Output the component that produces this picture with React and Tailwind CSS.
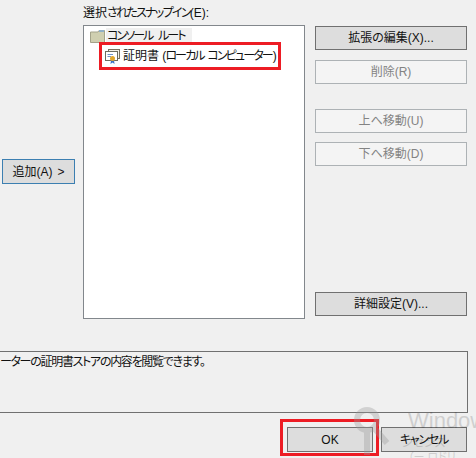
export default function App() {
  const Btn = ({ children, disabled, className = "" }) => (
    <div className={`w-[152px] h-[24px] flex items-center justify-center border text-[12px] leading-none ${disabled ? "border-[#adb2b5] bg-[#f4f4f4] text-[#838383]" : "border-[#707070] bg-[#dddddd] text-[#111]"} ${className}`}>{children}</div>
  );
  return (
    <div className="relative w-[476px] h-[458px] overflow-hidden bg-[#f0f0f0] flex flex-col [font-feature-settings:'palt'] font-['Liberation_Sans','Noto_Sans_CJK_JP',sans-serif] text-[#111]">
      <div className="flex pl-[2px] pr-[9px] pt-[6px]">
        <div className="w-[81px] flex flex-col pt-[153px]">
          <div className="w-[73px] h-[25px] flex items-center justify-center gap-[5px] border border-[#3c7fb1] bg-[#dddddd] text-[12px] leading-none"><span>追加(A)</span><span>&gt;</span></div>
        </div>
        <div className="w-[222px] flex flex-col">
          <div className="h-[19px] text-[12px] leading-[15px] whitespace-nowrap"><span>選択</span><span className="tracking-[-1.7px]">されたスナップイン</span><span>(E):</span></div>
          <div className="h-[294px] border border-[#82878c] bg-white pt-[2px] pl-[6px] flex flex-col">
            <div className="flex items-center h-[15px]">
              <svg width="15" height="14" viewBox="0 0 15 14" className="shrink-0">
                <path d="M0.5 3V13.5H14.5V1.5H9L8 3Z" fill="#cfcfb0" stroke="#a3a38a" />
                <rect x="9" y="1" width="5" height="2" fill="#8fb0c8" />
              </svg>
              <span className="ml-[1px] h-[16px] w-[86px] pl-[1px] bg-[#f0f0f0] text-[12px] leading-[17px] whitespace-nowrap tracking-[-1.9px] [word-spacing:4px]">コンソール ルート</span>
            </div>
            <div className="flex items-center pl-[15px] mt-[4px] h-[18px]">
              <svg width="16" height="16" viewBox="0 0 16 16" className="shrink-0">
                <rect x="3.5" y="1.5" width="11" height="9" fill="#f2efe6" stroke="#77705f" />
                <rect x="0.5" y="3.5" width="12" height="9" fill="#ffffff" stroke="#6b6b5f" />
                <path d="M2.5 6.5H8M2.5 8.5H6" stroke="#6f93c9" />
                <path d="M6 12L5.5 16L7.5 14.5L9.5 16L9 12Z" fill="#3a74c9" />
                <circle cx="7.5" cy="10.5" r="2.5" fill="#e0a62c" />
              </svg>
              <span className="ml-[2px] text-[12px] leading-[16px] whitespace-nowrap">証明書 <span className="-mr-[1px]">(</span><span className="tracking-[-1.85px] [word-spacing:2px]">ローカル コンピューター</span><span className="ml-[1px]">)</span></span>
            </div>
          </div>
        </div>
        <div className="w-[152px] ml-[10px] flex flex-col pt-[20px]">
          <Btn>拡張の編集(X)...</Btn>
          <Btn disabled className="mt-[10px]">削除(R)</Btn>
          <Btn disabled className="mt-[25px]">上へ移動(U)</Btn>
          <Btn disabled className="mt-[9px]">下へ移動(D)</Btn>
          <Btn className="mt-[126px]">詳細設定(V)...</Btn>
        </div>
      </div>
      <div className="mt-[32px] w-[468px] h-[62px] border-y border-r border-[#707070] pt-[1px] text-[12px] leading-[18px] whitespace-nowrap overflow-hidden tracking-[-1.3px]">ーターの証明書ストアの内容を閲覧できます。</div>
      <div className="mt-[14px] w-[467px] flex justify-end gap-[8px]">
        <div className="w-[86px] h-[25px] flex items-center justify-center border border-[#707070] bg-[#dddddd] text-[12px] leading-none">OK</div>
        <div className="w-[86px] h-[25px] flex items-center justify-center border border-[#707070] bg-[#dddddd] text-[12px] leading-none tracking-[-1.2px]">キャンセル</div>
      </div>

      <div className="absolute left-[99px] top-[42px] w-[182px] h-[28px] border-[3px] border-[#ed1c24]" />
      <div className="absolute left-[280px] top-[419px] w-[99px] h-[37px] border-[3px] border-[#ed1c24]" />

      <svg className="absolute left-[352px] top-[405px] opacity-35" width="50" height="53" viewBox="0 0 50 53">
        <circle cx="15" cy="15" r="10" fill="none" stroke="#9a9a9a" strokeWidth="6" />
        <path d="M15 26V50M23 24L35 38" stroke="#9a9a9a" strokeWidth="6" fill="none" />
      </svg>
      <div className="absolute left-[408px] top-[407px] text-[22px] leading-[28px] text-[#111] opacity-15 whitespace-nowrap">Windows</div>
      <div className="absolute left-[402px] top-[436px] text-[12px] leading-[14px] text-[#111] opacity-15 whitespace-nowrap">ンセンス</div>
      <div className="absolute left-[408px] top-[451px] text-[11px] leading-[12px] text-[#111] opacity-15 whitespace-nowrap">（ー ロドリ</div>
    </div>
  );
}
